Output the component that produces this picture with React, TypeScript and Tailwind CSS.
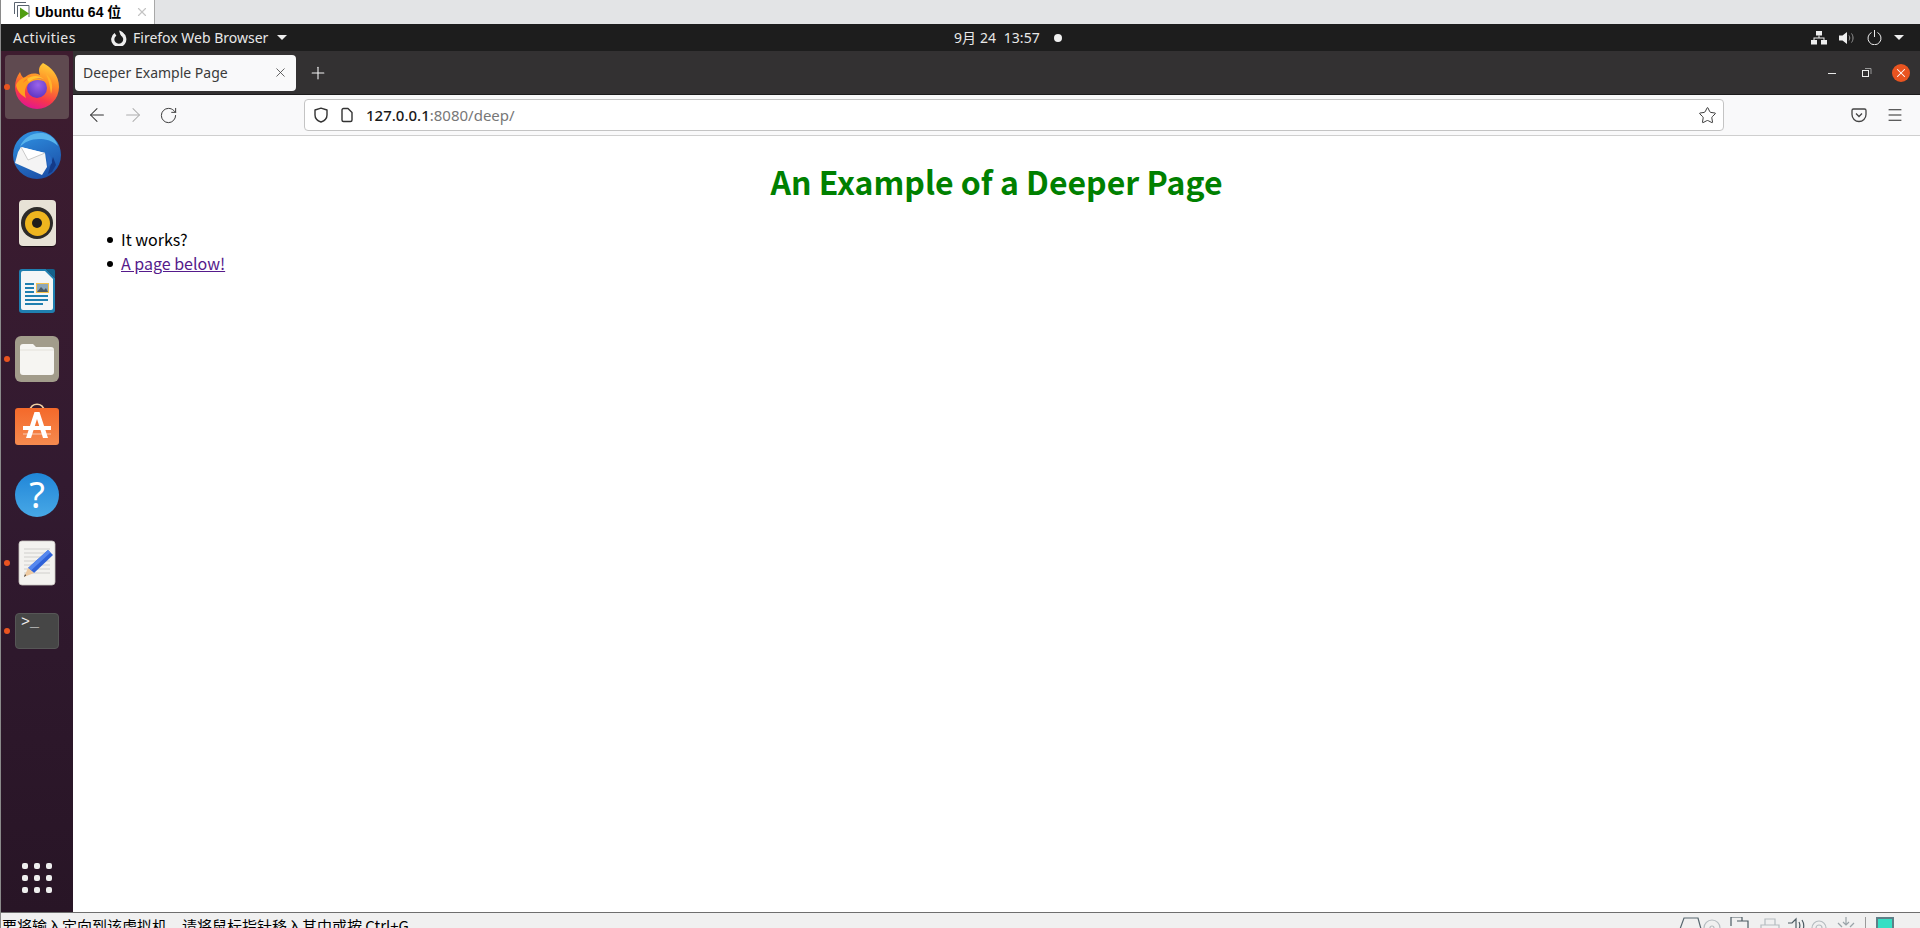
import { ArrowLeft, ArrowRight, Menu, Plus, RotateCw, Star, X } from 'lucide-react'

const uiFont = "font-['Noto_Sans','Noto_Sans_CJK_SC',sans-serif]"

function TabIcon() {
  return (
    <svg width="20" height="22" viewBox="0 0 20 22" className="shrink-0">
      <path d="M2.5 13V1.5H14" fill="none" stroke="#5a6470" strokeWidth="1" />
      <path d="M5.5 16V4.5H17V16" fill="none" stroke="#5a6470" strokeWidth="1" />
      <path d="M8 6.5L17 12.5L8 18.5Z" fill="#4f9d12" />
    </svg>
  )
}

function FirefoxIcon() {
  return (
    <svg width="48" height="50" viewBox="0 0 48 50">
      <defs>
        <linearGradient id="ffBody" x1="0.75" y1="0" x2="0.4" y2="1">
          <stop offset="0" stopColor="#ffd23a" />
          <stop offset="0.4" stopColor="#ff8a26" />
          <stop offset="0.75" stopColor="#f8384a" />
          <stop offset="1" stopColor="#e3168f" />
        </linearGradient>
        <radialGradient id="ffCore" cx="0.55" cy="0.35" r="0.75">
          <stop offset="0" stopColor="#9a63ea" />
          <stop offset="1" stopColor="#5630bd" />
        </radialGradient>
      </defs>
      <path d="M7 10C8 13 9 15 11 16C15 12 21 10 27 13C25 8 26 4 30 1C38 5 46 13 46 25A22 22 0 0 1 2 25C2 19 4 14 7 10Z" fill="url(#ffBody)" />
      <circle cx="24" cy="26" r="10" fill="url(#ffCore)" />
      <path d="M3 23C6 17 12 14 18 15C14 16 11 18 10 21C14 16 26 13 33 20C27 17 20 17 15 22C12 25 11 31 13 36C8 33 4 29 3 23Z" fill="#ff9f20" />
      <path d="M14 17C19 13 26 13 31 17C26 15 20 16 16 20Z" fill="#ffc233" />
      <path d="M33 12C38 16 41 23 38 32C37 25 36 18 33 12Z" fill="#ffb52b" />
    </svg>
  )
}

function ThunderbirdIcon() {
  return (
    <svg width="50" height="50" viewBox="0 0 50 50">
      <defs>
        <linearGradient id="tbBody" x1="0.3" y1="0" x2="0.7" y2="1">
          <stop offset="0" stopColor="#2f8fe0" />
          <stop offset="1" stopColor="#1a4ea6" />
        </linearGradient>
      </defs>
      <circle cx="25" cy="25" r="24" fill="url(#tbBody)" />
      <path d="M8 17C11 8 20 2 31 3C38 4 44 9 46 16C40 10 33 9 27 9C19 9 12 12 8 17Z" fill="#58b4ec" />
      <path d="M9 17L33 23L35 37L30 45L3 33L6 22Z" fill="#f4f4f4" />
      <path d="M9 17L16 30L33 23" fill="#ffffff" stroke="#bdbdbd" strokeWidth="0.8" />
      <path d="M36 44L41 27L44 35L40 42Z" fill="#143a88" />
      <path d="M34 22C38 24 40 28 40 33L36 37Z" fill="#2a6ac4" />
    </svg>
  )
}

function RhythmboxIcon() {
  return (
    <div className="flex h-[46px] w-[37px] items-center justify-center rounded-[4px] bg-[#e7e2d6] shadow-[0_1px_1px_#0008]">
      <div className="flex h-[32px] w-[32px] items-center justify-center rounded-full bg-[#2c2a28]">
        <div className="flex h-[25px] w-[25px] items-center justify-center rounded-full bg-[#eeb51f]">
          <div className="h-[10px] w-[10px] rounded-full bg-[#1f1d1b]" />
        </div>
      </div>
    </div>
  )
}

function WriterIcon() {
  return (
    <svg width="38" height="46" viewBox="0 0 38 46">
      <path d="M1 4A3 3 0 0 1 4 1H28L37 10V42A3 3 0 0 1 34 45H4A3 3 0 0 1 1 42Z" fill="#1f7fb0" />
      <path d="M3 5A2 2 0 0 1 5 3H27L35 11V40A2 2 0 0 1 33 42H5A2 2 0 0 1 3 40Z" fill="#f4f6f7" />
      <path d="M28 1H35A2 2 0 0 1 37 3V10Z" fill="#14628c" />
      <path d="M7 16H16M7 20H16M7 24H16M7 28H30M7 32H30M7 36H25" stroke="#1f7fb0" strokeWidth="2" />
      <rect x="18" y="15" width="13" height="10" fill="#f3c14b" />
      <rect x="19" y="16" width="11" height="8" fill="#8ca6b8" />
      <path d="M19 24L23 19L26 22L28 20L30 24Z" fill="#4a5a66" />
    </svg>
  )
}

function FilesIcon() {
  return (
    <div className="flex h-[46px] w-[44px] items-center justify-center rounded-[6px] bg-[#a29c8b]">
      <svg width="36" height="34" viewBox="0 0 36 34">
        <path d="M1 5A3 3 0 0 1 4 2H14L17 5H32A3 3 0 0 1 35 8V30A3 3 0 0 1 32 33H4A3 3 0 0 1 1 30Z" fill="#f6f5f2" />
        <path d="M1 8H35" stroke="#e3e1da" strokeWidth="1" />
      </svg>
    </div>
  )
}

function SoftwareIcon() {
  return (
    <svg width="44" height="42" viewBox="0 0 44 42" className="mb-[6px]">
      <defs>
        <linearGradient id="swBag" x1="0" y1="0" x2="0" y2="1">
          <stop offset="0" stopColor="#f4692a" />
          <stop offset="1" stopColor="#f58a4f" />
        </linearGradient>
      </defs>
      <path d="M15 8C15 -1 29 -1 29 8" fill="none" stroke="#f0d0a4" strokeWidth="1.6" />
      <rect x="0" y="5" width="44" height="37" rx="3" fill="url(#swBag)" />
      <path d="M19.5 9H24.5L33 35H28L22 16L16 35H11Z" fill="#ffffff" />
      <path d="M8 23H36V27H8Z" fill="#ffffff" />
      <path d="M8 31H36" stroke="#ffffff" strokeWidth="1" opacity="0.6" />
    </svg>
  )
}

function HelpIcon() {
  return (
    <div className="flex h-[44px] w-[44px] items-center justify-center rounded-full bg-gradient-to-b from-[#1f86d8] to-[#47a8e6] font-['Noto_Sans',sans-serif] text-[36px] leading-none text-white">
      ?
    </div>
  )
}

function EditorIcon() {
  return (
    <svg width="38" height="46" viewBox="0 0 38 46">
      <rect x="1" y="1" width="36" height="44" rx="3" fill="#f3f2ef" stroke="#c9c7c2" strokeWidth="0.8" />
      <path d="M6 9H32M6 13H32M6 17H32M6 21H32M6 25H32M6 29H32M6 33H32" stroke="#d0cfcc" strokeWidth="1" />
      <path d="M30 10L35 15L16 33L10 28Z" fill="#2f62d8" />
      <path d="M30 10L32.5 12.5L13 30.5L10 28Z" fill="#5587ee" />
      <path d="M10 28L16 33L6 37Z" fill="#edc9a0" />
      <path d="M8 35.5L6 37L7 34Z" fill="#333" />
    </svg>
  )
}

function TerminalIcon() {
  return (
    <div className="h-[36px] w-[44px] rounded-[4px] border border-[#565656] bg-[#464646] pl-[5px] font-['Liberation_Mono',monospace] text-[15px] leading-[17px] text-[#f0f0f0]">
      &gt;_
    </div>
  )
}

function DockItem({
  children,
  running = false,
  active = false,
}: {
  children: React.ReactNode
  running?: boolean
  active?: boolean
}) {
  return (
    <div className={`relative flex h-[64px] w-[64px] items-center justify-center rounded-[4px] ${active ? 'bg-[#5f4a50]' : ''}`}>
      {running && <span className="absolute top-[29px] -left-[1px] h-[6px] w-[6px] rounded-full bg-[#e95420]" />}
      {children}
    </div>
  )
}

function Dock() {
  return (
    <aside className="flex w-[72px] shrink-0 flex-col items-center justify-between bg-gradient-to-b from-[#3e1c2f] via-[#321a30] to-[#281526] pt-[4px] pb-[19px]">
      <div className="flex flex-col gap-[4px]">
        <DockItem running active><FirefoxIcon /></DockItem>
        <DockItem><ThunderbirdIcon /></DockItem>
        <DockItem><RhythmboxIcon /></DockItem>
        <DockItem><WriterIcon /></DockItem>
        <DockItem running><FilesIcon /></DockItem>
        <DockItem><SoftwareIcon /></DockItem>
        <DockItem><HelpIcon /></DockItem>
        <DockItem running><EditorIcon /></DockItem>
        <DockItem running><TerminalIcon /></DockItem>
      </div>
      <div className="grid grid-cols-3 gap-[6px]">
        {Array.from({ length: 9 }).map((_, i) => (
          <span key={i} className="h-[6px] w-[6px] rounded-[2px] bg-[#eeeeee]" />
        ))}
      </div>
    </aside>
  )
}

function TopPanel() {
  return (
    <div className={`flex h-[27px] shrink-0 items-center bg-[#1d1d1d] text-[14px] text-[#e8e8e8] ${uiFont}`}>
      <span className="ml-[12px] w-[97px] tracking-[0.45px]">Activities</span>
      <svg width="16" height="16" viewBox="0 0 16 16" className="mr-[6px] ml-[1px]">
        <path d="M10.5 4A6 6 0 1 1 4.5 4.3" fill="none" stroke="#eeeeee" strokeWidth="3.2" />
        <path d="M8 0.5C10.5 1 12.5 2.5 13.5 5L9.5 5Z" fill="#eeeeee" />
      </svg>
      <span className="w-[144px]">Firefox Web Browser</span>
      <span className="h-0 w-0 border-x-[5px] border-t-[5px] border-x-transparent border-t-[#eeeeee]" />
      <span className="ml-[667px] w-[100px] tracking-[0.1px] whitespace-pre">9月 24  13:57</span>
      <span className="h-[8px] w-[8px] rounded-full bg-[#f0f0f0]" />
      <div className="ml-auto flex items-center pr-[16px]">
        <svg width="16" height="14" viewBox="0 0 16 14" fill="#eeeeee">
          <rect x="5" y="0" width="6" height="4.5" />
          <rect x="0" y="9" width="6" height="4.5" />
          <rect x="10" y="9" width="6" height="4.5" />
          <path d="M7.5 4.5H8.5V6.5H13.5V9H12.5V7.5H3.5V9H2.5V6.5H7.5Z" />
        </svg>
        <svg width="16" height="14" viewBox="0 0 16 14" className="ml-[12px]">
          <path d="M0 4.5H3.5L8 1V13L3.5 9.5H0Z" fill="#eeeeee" />
          <path d="M10 4.5C11 6 11 8 10 9.5M12.5 2.5C14.5 5 14.5 9 12.5 11.5" fill="none" stroke="#999999" strokeWidth="1" />
        </svg>
        <svg width="15" height="15" viewBox="0 0 15 15" fill="none" stroke="#eeeeee" strokeWidth="1" className="ml-[12px]">
          <path d="M4.5 2.5A6.5 6.5 0 1 0 10.5 2.5" />
          <path d="M7.5 0V7" />
        </svg>
        <span className="ml-[12px] h-0 w-0 border-x-[5px] border-t-[5px] border-x-transparent border-t-[#eeeeee]" />
      </div>
    </div>
  )
}

function TitleBar() {
  return (
    <div className={`flex h-[44px] shrink-0 items-center border-b border-[#1c1b1c] bg-[#333132] pl-[2px] ${uiFont}`}>
      <div className="flex h-[36px] w-[221px] items-center justify-between rounded-[4px] bg-[#f9f9fa] pr-[8px] pl-[8px] text-[14px] text-[#3b3b3b]">
        <span>Deeper Example Page</span>
        <X size={15} strokeWidth={1.3} className="text-[#444444]" />
      </div>
      <Plus size={20} strokeWidth={1.3} className="ml-[12px] text-[#f4f4f4]" />
      <div className="ml-auto flex items-center pr-[10px]">
        <span className="mt-[2px] h-[1px] w-[8px] bg-[#e8e8e8]" />
        <svg width="10" height="10" viewBox="0 0 10 10" fill="none" className="ml-[26px]">
          <rect x="0.5" y="2.5" width="6" height="6" stroke="#eeeeee" />
          <path d="M3 0.5H9V6" stroke="#999999" />
        </svg>
        <span className="ml-[20px] flex h-[18px] w-[18px] items-center justify-center rounded-full bg-[#e95420]">
          <X size={14} strokeWidth={1.8} className="text-white" />
        </span>
      </div>
    </div>
  )
}

function NavBar() {
  return (
    <div className={`flex h-[41px] shrink-0 items-center border-b border-[#cfcfcf] bg-[#f9f9fa] ${uiFont}`}>
      <ArrowLeft size={22} strokeWidth={1.1} className="ml-[13px] text-[#333333]" />
      <ArrowRight size={22} strokeWidth={1.1} className="ml-[14px] text-[#adadad]" />
      <RotateCw size={19} strokeWidth={1.2} className="ml-[15px] text-[#333333]" />
      <div className="ml-[126px] flex h-[32px] w-[1420px] items-center rounded-[4px] border border-[#c4c4c4] bg-white pr-[6px] pl-[8px] text-[15px]">
        <svg width="16" height="16" viewBox="0 0 16 16" fill="none" stroke="#333333" strokeWidth="1.4">
          <path d="M8 1.2L14 3V8C14 11.5 11 14 8 15C5 14 2 11.5 2 8V3Z" strokeLinejoin="round" />
        </svg>
        <svg width="14" height="16" viewBox="0 0 14 16" fill="none" stroke="#333333" strokeWidth="1.4" className="ml-[11px]">
          <path d="M2 3A1.5 1.5 0 0 1 3.5 1.5H8L12 5.5V13A1.5 1.5 0 0 1 10.5 14.5H3.5A1.5 1.5 0 0 1 2 13Z" strokeLinejoin="round" />
        </svg>
        <span className="ml-[12px] font-medium text-[#1a1a1a]">
          127.0.0.1<span className="font-normal text-[#777777]">:8080/deep/</span>
        </span>
        <Star size={19} strokeWidth={1.2} className="ml-auto text-[#333333]" />
      </div>
      <div className="ml-auto flex items-center gap-[19px] pr-[16px]">
        <svg width="16" height="16" viewBox="0 0 16 16" fill="none" stroke="#444444" strokeWidth="1.3">
          <path d="M2.5 2H13.5A1.5 1.5 0 0 1 15 3.5V7.5A7 7 0 0 1 1 7.5V3.5A1.5 1.5 0 0 1 2.5 2Z" />
          <path d="M5 6.5L8 9.5L11 6.5" />
        </svg>
        <Menu size={18} strokeWidth={1.3} className="text-[#222222]" />
      </div>
    </div>
  )
}

function StatusIcons() {
  return (
    <div className="ml-auto flex h-[16px] items-start pt-[4px] pr-[26px]">
      <svg width="178" height="13" viewBox="0 0 178 13" fill="none" strokeWidth="1.2">
        <path d="M2 12L6 1H20L23 12" stroke="#56666e" />
        <circle cx="34" cy="11" r="8" stroke="#b5bcc0" />
        <circle cx="34" cy="11" r="2" stroke="#b5bcc0" />
        <path d="M53 9V0H64V4M59 4H70V13" stroke="#4c5b63" />
        <path d="M83 12V8H101V12M87 8V2H97V8" stroke="#b5bcc0" />
        <path d="M110 6H114L118 2V13M121 5C122 7 122 10 121 12M124 3C126 6 126 10 125 13" stroke="#4c5b63" />
        <circle cx="141" cy="11" r="7" stroke="#b5bcc0" />
        <circle cx="141" cy="11" r="3" stroke="#b5bcc0" />
        <path d="M168 0V8M165 5L168 8L171 5M160 6L164 10M176 6L172 10" stroke="#9aa3a8" />
      </svg>
      <span className="mr-[10px] ml-[9px] h-[13px] w-[1px] bg-[#9a9a9a]" />
      <span className="h-[16px] w-[18px] border-2 border-[#5f7f88] bg-[#35dfc4]" />
    </div>
  )
}

function Bullet() {
  return <span className="mt-[2px] mr-[8px] -ml-[14px] h-[6px] w-[6px] shrink-0 rounded-full bg-black" />
}

export default function App() {
  return (
    <div className="flex h-[928px] flex-col overflow-hidden border-l border-[#8a8a8a] bg-white">
      {/* VM tab strip */}
      <div className="flex h-[24px] shrink-0 bg-[#e3e4e6]">
        <div className="flex h-[24px] w-[154px] items-center gap-[3px] overflow-hidden border-r border-[#a8a8a8] bg-white pl-[11px] font-['Liberation_Sans','Noto_Sans_CJK_SC',sans-serif] text-[14px] font-bold text-black">
          <TabIcon />
          <span className="whitespace-nowrap">Ubuntu 64 位</span>
          <X size={14} strokeWidth={2} className="ml-[11px] shrink-0 text-[#c4c4c4]" />
        </div>
      </div>

      <TopPanel />

      <div className="flex min-h-0 flex-1">
        <Dock />
        <div className="flex min-w-0 flex-1 flex-col">
          <TitleBar />
          <NavBar />
          <main className="flex-1 bg-white font-['Noto_Sans_CJK_SC',sans-serif] text-black">
            <h1 className="mt-[22px] text-center text-[32px] leading-[46px] font-bold text-[#008000]">An Example of a Deeper Page</h1>
            <ul className="mt-[23px] pl-[48px] text-[16px] leading-[24px]">
              <li className="flex items-center">
                <Bullet />
                It works?
              </li>
              <li className="flex items-center">
                <Bullet />
                <a href="#" className="text-[#551a8b] underline">A page below!</a>
              </li>
            </ul>
          </main>
        </div>
      </div>

      {/* VM status bar */}
      <div className="flex h-[16px] shrink-0 overflow-hidden border-t border-[#6e6e6e] bg-[#f0f0f0]">
        <span className="pl-[1px] font-['Noto_Sans_CJK_SC',sans-serif] text-[15px] leading-[26px] whitespace-nowrap text-black">要将输入定向到该虚拟机，请将鼠标指针移入其中或按 Ctrl+G。</span>
        <StatusIcons />
      </div>
    </div>
  )
}
